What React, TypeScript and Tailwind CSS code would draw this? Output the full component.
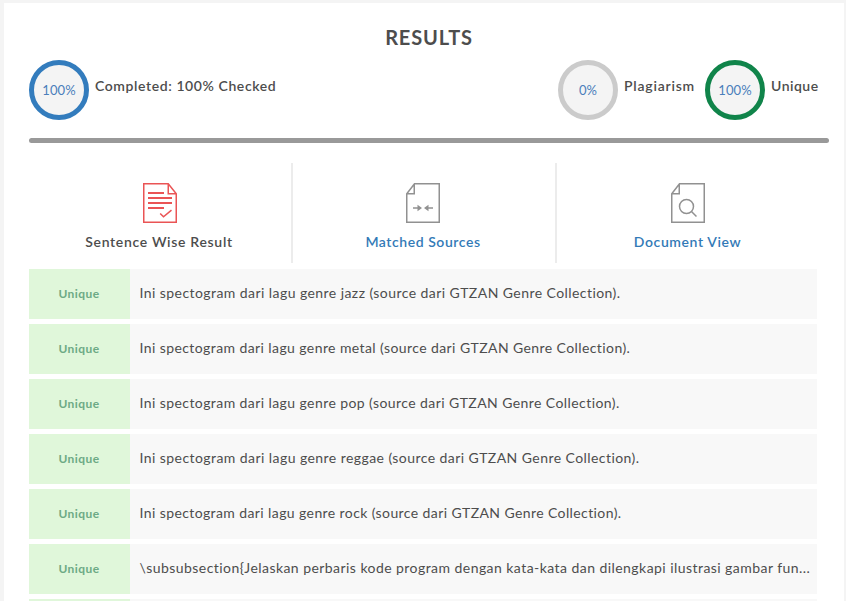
import type { ReactNode } from "react";

const rows = [
  { text: "Ini spectogram dari lagu genre jazz (source dari GTZAN Genre Collection).", tracking: "tracking-[0.435px]" },
  { text: "Ini spectogram dari lagu genre metal (source dari GTZAN Genre Collection).", tracking: "tracking-[0.41px]" },
  { text: "Ini spectogram dari lagu genre pop (source dari GTZAN Genre Collection).", tracking: "tracking-[0.42px]" },
  { text: "Ini spectogram dari lagu genre reggae (source dari GTZAN Genre Collection).", tracking: "tracking-[0.435px]" },
  { text: "Ini spectogram dari lagu genre rock (source dari GTZAN Genre Collection).", tracking: "tracking-[0.4px]" },
  { text: "\\subsubsection{Jelaskan perbaris kode program dengan kata-kata dan dilengkapi ilustrasi gambar fun...", tracking: "tracking-[0.445px]" },
];

function Ring({ value, color }: { value: string; color: string }) {
  return (
    <div className={`flex size-[60px] shrink-0 items-center justify-center rounded-full border-[5px] bg-[#f4f4f4] text-[13px] font-normal leading-5 tracking-[0.1px] text-[#4a7ebb] ${color}`}>
      {value}
    </div>
  );
}

function Tab({ label, style, labelStyle, children }: { label: string; style: string; labelStyle: string; children: ReactNode }) {
  return (
    <div className={`flex h-[100px] flex-col items-center pt-5 text-sm font-semibold leading-5 ${style}`}>
      {children}
      <span className={`mt-[9px] whitespace-nowrap ${labelStyle}`}>{label}</span>
    </div>
  );
}

function ReportIcon() {
  return (
    <svg width="34" height="40" viewBox="0 0 34 40" fill="none" stroke="#ea5455" strokeWidth="1.5">
      <path d="M.75.75h24.5l8 10v28.5H.75zM25.25.75v10h8" />
      <path d="M5 10h16M5 15h24M5 20h24M5 25h16" strokeWidth="1.8" />
      <path d="m17.2 30.5 3.3 3.3 8-6.6" />
    </svg>
  );
}

function MatchIcon() {
  return (
    <svg width="34" height="40" viewBox="0 0 34 40" fill="none" stroke="#919191" strokeWidth="1.5">
      <path d="M8.5.75h24.75v38.5H.75v-28.5zM8.25.75v10H.75" />
      <path d="M7 25h7M20 25h7" />
      <path d="m11.5 21.8 4.5 3.2-4.5 3.2zM22.5 21.8 18 25l4.5 3.2z" fill="#919191" stroke="none" />
    </svg>
  );
}

function SearchDocumentIcon() {
  return (
    <svg width="34" height="40" viewBox="0 0 34 40" fill="none" stroke="#919191" strokeWidth="1.5">
      <path d="M8.5.75h24.75v38.5H.75v-28.5zM8.25.75v10H.75" />
      <circle cx="15.5" cy="23.5" r="7" />
      <path d="m20.5 28.5 5 5" />
    </svg>
  );
}

export default function App() {
  return (
    <div className="h-[601px] overflow-hidden bg-[#f4f4f4] pl-1 pr-0.5 pt-[3px] font-[Lato,sans-serif] text-[#4d4d4d]">
      <main className="h-[598px] overflow-hidden bg-white pl-[25px] pr-[15px] pt-[21px]">
        <h1 className="text-center text-xl font-bold leading-[26px]">
          <span className="tracking-[0.85px]">RESULTS</span>
        </h1>
        <section className="mt-2.5 flex h-[60px] text-sm font-semibold leading-5">
          <div className="flex gap-1.5">
            <Ring value="100%" color="border-[#337cbd]" />
            <span className="mt-4 tracking-[0.59px]">Completed: 100% Checked</span>
          </div>
          <div className="ml-auto flex w-[271px]">
            <Ring value="0%" color="border-[#cbcbcb]" />
            <span className="ml-1.5 mt-4 w-[81px] tracking-[0.78px]">Plagiarism</span>
            <Ring value="100%" color="border-[#10844a]" />
            <span className="ml-1.5 mt-4 tracking-[0.5px]">Unique</span>
          </div>
        </section>
        <div className="mt-[18px] h-[5px] w-[800px] rounded-sm bg-[#999]" />
        <nav className="mt-5 grid grid-cols-[262px_2px_262px_2px_262px]">
          <Tab label="Sentence Wise Result" style="text-[#4d4d4d]" labelStyle="mr-0.5 tracking-[0.68px]"><ReportIcon /></Tab>
          <div className="bg-[#ececec]" />
          <Tab label="Matched Sources" style="pr-0.5 text-[#337ab7]" labelStyle="tracking-[0.56px]"><MatchIcon /></Tab>
          <div className="bg-[#ececec]" />
          <Tab label="Document View" style="text-[#337ab7]" labelStyle="mr-px tracking-[0.6px]"><SearchDocumentIcon /></Tab>
        </nav>
        <section className="mt-1.5 flex w-[788px] flex-col gap-[5px]">
          {rows.map((row) => (
            <div key={row.text} className="flex h-[50px] shrink-0 items-center bg-[#f8f8f8]">
              <div className="flex h-full w-[101px] items-center justify-center bg-[#e0f7da] text-xs font-bold text-[#6daa85]">
                <span className="mr-px tracking-[0.45px]">Unique</span>
              </div>
              <p className={`-mt-0.5 ml-[9.5px] whitespace-nowrap text-sm leading-5 ${row.tracking}`}>{row.text}</p>
            </div>
          ))}
          <div className="h-[50px] shrink-0 bg-[#f8f8f8]">
            <div className="h-full w-[101px] bg-[#e0f7da]" />
          </div>
        </section>
      </main>
    </div>
  );
}
